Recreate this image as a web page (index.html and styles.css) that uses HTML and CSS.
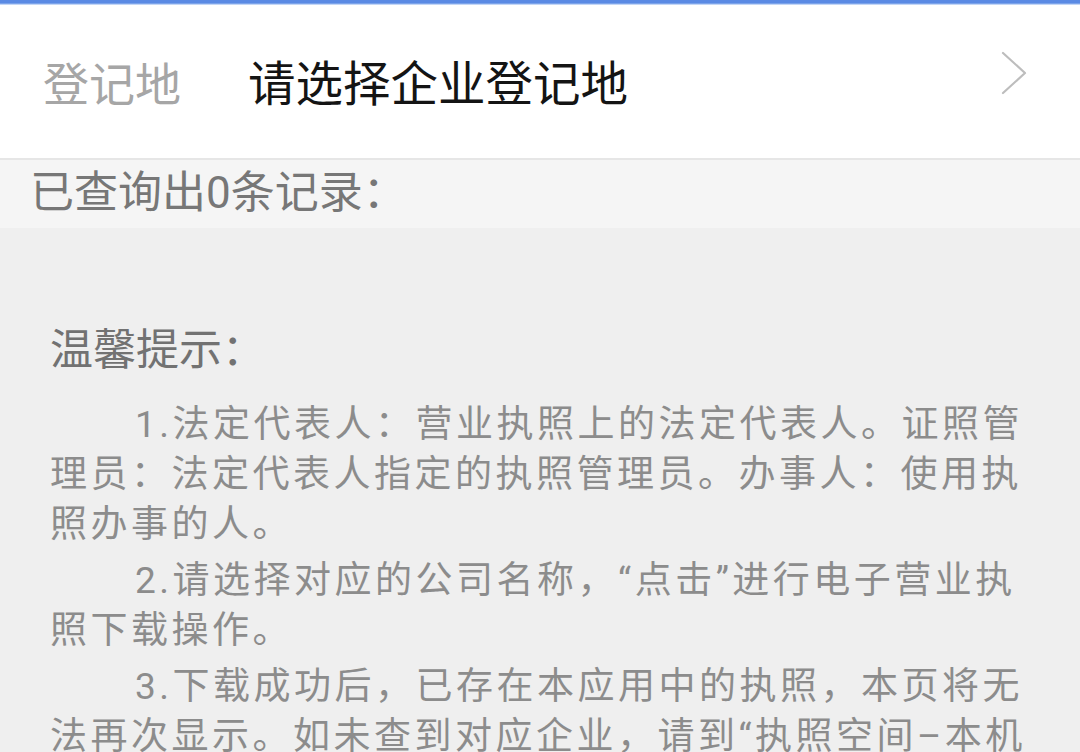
FILE: index.html
```html
<!DOCTYPE html>
<html lang="zh-CN">
<head>
<meta charset="utf-8">
<title>登记地</title>
<link rel="stylesheet" href="styles.css">
</head>
<body>
<div class="page">
  <div class="topbar"></div>
  <header class="picker">
    <span class="picker-label">登记地</span>
    <span class="picker-value">请选择企业登记地</span>
    <svg class="chevron" width="28" height="46" viewBox="0 0 28 46" aria-hidden="true">
      <path d="M3 3 L25 23 L3 43" fill="none" stroke="#bdbdbd" stroke-width="2.2" stroke-linecap="round" stroke-linejoin="round"/>
    </svg>
  </header>
  <div class="count">已查询出0条记录：</div>
  <section class="tips">
    <h2 class="tips-title">温馨提示：</h2>
    <p class="tip">1.法定代表人：营业执照上的法定代表人。证照管理员：法定代表人指定的执照管理员。办事人：使用执照办事的人。</p>
    <p class="tip">2.请选择对应的公司名称，“点击”进行电子营业执照下载操作。</p>
    <p class="tip">3.下载成功后，已存在本应用中的执照，本页将无法再次显示。如未查到对应企业，请到“执照空间–本机执照”中查看。</p>
  </section>
</div>
</body>
</html>
```

FILE: styles.css
```css
html, body {
  margin: 0;
  padding: 0;
}
body {
  width: 1080px;
  height: 752px;
  overflow: hidden;
  background: #efefef;
  font-family: Roboto, "Noto Sans CJK SC", sans-serif;
}
.page {
  display: flex;
  flex-direction: column;
}
.topbar {
  height: 5px;
  background: linear-gradient(#5a8ae4 0, #5a8ae4 3px, #9dbcf0 4px, #e9f0fc 5px);
}
.picker {
  height: 153px;
  background: #ffffff;
  border-bottom: 2px solid #e6e6e6;
  display: flex;
  align-items: center;
  padding: 0 52px 0 43px;
  box-sizing: content-box;
}
.picker-label {
  font-size: 46px;
  color: #a6a6a6;
  width: 205px;
  flex: none;
  margin-bottom: 2px;
}
.picker-value {
  font-size: 47.5px;
  color: #141414;
  flex: 1;
  margin-bottom: 2px;
}
.chevron {
  flex: none;
  margin-top: -18px;
}
.count {
  height: 68px;
  box-sizing: border-box;
  background: #f5f5f5;
  display: flex;
  align-items: center;
  padding: 0 0 10px 30px;
  font-size: 44px;
  color: #777777;
}
.tips {
  padding: 97px 45px 0 50px;
}
.tips-title {
  margin: 0 0 25px;
  font-size: 43px;
  font-weight: normal;
  line-height: 50px;
  color: #727272;
}
.tip {
  margin: 0 0 6px;
  font-size: 37px;
  line-height: 50px;
  letter-spacing: 3.5px;
  color: #8c8c8c;
  text-indent: 85px;
}
```
